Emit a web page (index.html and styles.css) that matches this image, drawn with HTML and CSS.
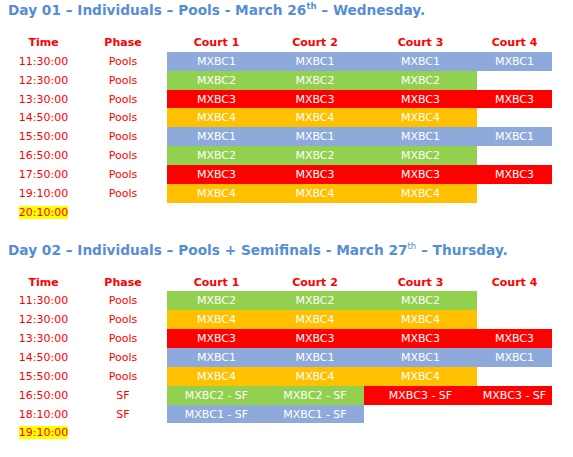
FILE: index.html
```html
<!DOCTYPE html>
<html>
<head>
<meta charset="utf-8">
<link rel="stylesheet" href="styles.css">
</head>
<body>
<h2 class="title">Day 01 – Individuals – Pools - March 26<sup>th</sup> – Wednesday.</h2>
<table class="sched">
  <colgroup><col class="c-time"><col class="c-phase"><col class="c-c1"><col class="c-c2"><col class="c-c3"><col class="c-c4"></colgroup>
  <tr><th>Time</th><th>Phase</th><th>Court 1</th><th>Court 2</th><th>Court 3</th><th>Court 4</th></tr>
  <tr><td class="t">11:30:00</td><td class="p">Pools</td><td class="b">MXBC1</td><td class="b">MXBC1</td><td class="b">MXBC1</td><td class="b">MXBC1</td></tr>
  <tr><td class="t">12:30:00</td><td class="p">Pools</td><td class="g">MXBC2</td><td class="g">MXBC2</td><td class="g">MXBC2</td><td></td></tr>
  <tr><td class="t">13:30:00</td><td class="p">Pools</td><td class="r">MXBC3</td><td class="r">MXBC3</td><td class="r">MXBC3</td><td class="r">MXBC3</td></tr>
  <tr><td class="t">14:50:00</td><td class="p">Pools</td><td class="o">MXBC4</td><td class="o">MXBC4</td><td class="o">MXBC4</td><td></td></tr>
  <tr><td class="t">15:50:00</td><td class="p">Pools</td><td class="b">MXBC1</td><td class="b">MXBC1</td><td class="b">MXBC1</td><td class="b">MXBC1</td></tr>
  <tr><td class="t">16:50:00</td><td class="p">Pools</td><td class="g">MXBC2</td><td class="g">MXBC2</td><td class="g">MXBC2</td><td></td></tr>
  <tr><td class="t">17:50:00</td><td class="p">Pools</td><td class="r">MXBC3</td><td class="r">MXBC3</td><td class="r">MXBC3</td><td class="r">MXBC3</td></tr>
  <tr><td class="t">19:10:00</td><td class="p">Pools</td><td class="o">MXBC4</td><td class="o">MXBC4</td><td class="o">MXBC4</td><td></td></tr>
  <tr><td class="t"><span class="hl">20:10:00</span></td><td></td><td></td><td></td><td></td><td></td></tr>
</table>

<h2 class="title second">Day 02 – Individuals – Pools + Semifinals - March 27<sup class="thin">th</sup> – Thursday.</h2>
<table class="sched">
  <colgroup><col class="c-time"><col class="c-phase"><col class="c-c1"><col class="c-c2"><col class="c-c3"><col class="c-c4"></colgroup>
  <tr><th>Time</th><th>Phase</th><th>Court 1</th><th>Court 2</th><th>Court 3</th><th>Court 4</th></tr>
  <tr><td class="t">11:30:00</td><td class="p">Pools</td><td class="g">MXBC2</td><td class="g">MXBC2</td><td class="g">MXBC2</td><td></td></tr>
  <tr><td class="t">12:30:00</td><td class="p">Pools</td><td class="o">MXBC4</td><td class="o">MXBC4</td><td class="o">MXBC4</td><td></td></tr>
  <tr><td class="t">13:30:00</td><td class="p">Pools</td><td class="r">MXBC3</td><td class="r">MXBC3</td><td class="r">MXBC3</td><td class="r">MXBC3</td></tr>
  <tr><td class="t">14:50:00</td><td class="p">Pools</td><td class="b">MXBC1</td><td class="b">MXBC1</td><td class="b">MXBC1</td><td class="b">MXBC1</td></tr>
  <tr><td class="t">15:50:00</td><td class="p">Pools</td><td class="o">MXBC4</td><td class="o">MXBC4</td><td class="o">MXBC4</td><td></td></tr>
  <tr><td class="t">16:50:00</td><td class="p">SF</td><td class="g">MXBC2 - SF</td><td class="g">MXBC2 - SF</td><td class="r">MXBC3 - SF</td><td class="r">MXBC3 - SF</td></tr>
  <tr><td class="t">18:10:00</td><td class="p">SF</td><td class="b">MXBC1 - SF</td><td class="b">MXBC1 - SF</td><td></td><td></td></tr>
  <tr><td class="t"><span class="hl">19:10:00</span></td><td></td><td></td><td></td><td></td><td></td></tr>
</table>
</body>
</html>
```

FILE: styles.css
```css
body {
  margin: 0;
  padding: 0 8px;
  background: #fff;
  font-family: "DejaVu Sans", Verdana, sans-serif;
}
.title {
  margin: 3px 0 15px 0;
  font-size: 13.7px;
  font-weight: bold;
  line-height: 15px;
  color: #558ed5;
  white-space: nowrap;
}
.title sup {
  font-size: 8.5px;
  line-height: 0;
  vertical-align: 6px;
}
.title sup.thin {
  font-weight: normal;
}
.title.second {
  margin-top: 21px;
}
.sched {
  border-collapse: collapse;
  border-spacing: 0;
  table-layout: fixed;
  width: 544px;
  font-size: 11px;
}
.c-time { width: 71px; }
.c-phase { width: 88px; }
.c-c1 { width: 99px; }
.c-c2 { width: 98px; }
.c-c3 { width: 113px; }
.c-c4 { width: 75px; }
.sched th, .sched td {
  padding: 0;
  height: 18.86px;
  text-align: center;
  vertical-align: middle;
  white-space: nowrap;
  line-height: 13px;
}
.sched th {
  color: #ff0000;
  font-weight: bold;
}
.t, .p { color: #ff0000; }
.hl { background: #ffff00; }
.b, .g, .r, .o { color: #ffffff; }
.b { background: #8eaadb; }
.g { background: #92d050; }
.r { background: #ff0000; }
.o { background: #ffc000; }
```
